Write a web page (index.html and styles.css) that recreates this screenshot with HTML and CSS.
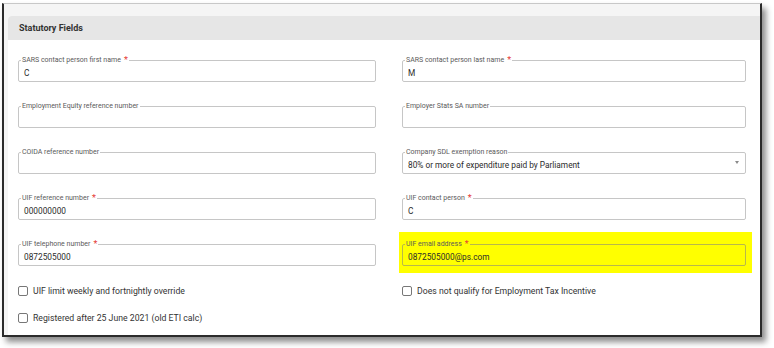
FILE: index.html
```html
<!DOCTYPE html>
<html>
<head>
<meta charset="utf-8">
<link rel="stylesheet" href="styles.css">
</head>
<body>
<div class="frame">
  <div class="card">
    <div class="card-header">Statutory Fields</div>
    <div class="card-body">
      <div class="grid">
        <div class="field"><span class="label">SARS contact person first name<span class="req">*</span></span><span class="value">C</span></div>
        <div class="field"><span class="label">SARS contact person last name<span class="req">*</span></span><span class="value">M</span></div>
        <div class="field"><span class="label">Employment Equity reference number</span><span class="value"></span></div>
        <div class="field"><span class="label">Employer Stats SA number</span><span class="value"></span></div>
        <div class="field"><span class="label">COIDA reference number</span><span class="value"></span></div>
        <div class="field select"><span class="label">Company SDL exemption reason</span><span class="value">80% or more of expenditure paid by Parliament</span><span class="arrow"></span></div>
        <div class="field"><span class="label">UIF reference number<span class="req">*</span></span><span class="value">000000000</span></div>
        <div class="field"><span class="label">UIF contact person<span class="req">*</span></span><span class="value">C</span></div>
        <div class="field"><span class="label">UIF telephone number<span class="req">*</span></span><span class="value">0872505000</span></div>
        <div class="highlight"><div class="field hl"><span class="label">UIF email address<span class="req">*</span></span><span class="value">0872505000@ps.com</span></div></div>
      </div>
      <div class="checks">
        <label class="check"><span class="box"></span>UIF limit weekly and fortnightly override</label>
        <label class="check"><span class="box"></span>Does not qualify for Employment Tax Incentive</label>
        <label class="check"><span class="box"></span>Registered after 25 June 2021 (old ETI calc)</label>
      </div>
    </div>
  </div>
</div>
</body>
</html>
```

FILE: styles.css
```css
html, body {
  margin: 0;
  padding: 0;
  background: #ffffff;
}
body {
  width: 774px;
  height: 348px;
  overflow: hidden;
  font-family: Roboto, "Liberation Sans", sans-serif;
  color: #333;
}
.frame {
  box-sizing: border-box;
  margin: 3px 0 0 2px;
  width: 760px;
  height: 334px;
  border-left: 2px solid #2b2b2b;
  border-right: 2px solid #2b2b2b;
  border-bottom: 2px solid #2b2b2b;
  border-top: 1px solid #c8c8c8;
  background: #f5f5f5;
  padding: 12px 0 0 4px;
  box-shadow: 4px 5px 6px rgba(0, 0, 0, 0.45);
  overflow: hidden;
}
.card {
  background: #fff;
  border-top-left-radius: 4px;
  height: 100%;
  overflow: hidden;
}
.card-header {
  height: 24px;
  background: #e6e6e6;
  font-size: 9px;
  font-weight: 700;
  line-height: 24px;
  padding-left: 11px;
  color: #333;
}
.card-body {
  padding: 20px 0 0 10px;
}
.grid {
  display: grid;
  grid-template-columns: 358px 344px;
  column-gap: 26px;
  row-gap: 24px;
}
.field {
  position: relative;
  box-sizing: border-box;
  height: 22px;
  border: 1px solid #c6c6c6;
  border-radius: 2px;
  padding: 7px 0 0 5px;
}
.label {
  position: absolute;
  top: -4px;
  left: 2px;
  padding: 0 1px;
  background: #fff;
  font-size: 7px;
  line-height: 7px;
  color: #5a5a5a;
  white-space: nowrap;
}
.req {
  color: #e53935;
  font-size: 9px;
  line-height: 7px;
  margin-left: 3px;
  vertical-align: -1px;
}
.value {
  display: block;
  font-size: 8.3px;
  line-height: 11px;
  color: #2b2b2b;
}
.arrow {
  position: absolute;
  right: 6px;
  top: 8px;
  width: 0;
  height: 0;
  border-left: 2.5px solid transparent;
  border-right: 2.5px solid transparent;
  border-top: 3px solid #8a8a8a;
}
.highlight {
  background: #ffff00;
  margin: -12px -6px -7px -3px;
  padding: 12px 6px 7px 3px;
}
.field.hl {
  border-color: #b8b84a;
}
.field.hl .label {
  background: #ffff00;
}
.checks {
  display: grid;
  grid-template-columns: 358px 344px;
  column-gap: 26px;
  row-gap: 17px;
  margin-top: 20px;
}
.check {
  display: flex;
  align-items: center;
  gap: 5px;
  height: 10px;
  font-size: 8.7px;
  color: #333;
}
.box {
  box-sizing: border-box;
  width: 10px;
  height: 10px;
  border: 1px solid #777;
  border-radius: 2px;
  background: #fff;
}
```
